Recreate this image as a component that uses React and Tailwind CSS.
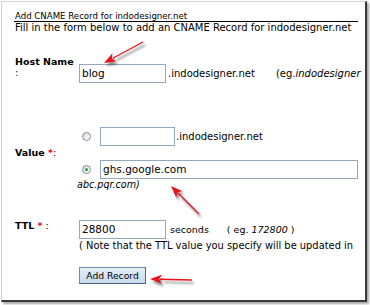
import React from "react";

function Arrow({ x1, y1, x2, y2, id }) {
  const dx = x2 - x1;
  const dy = y2 - y1;
  const len = Math.sqrt(dx * dx + dy * dy);
  const ux = dx / len;
  const uy = dy / len;
  const hl = 12;
  const hw = 4.5;
  const bx = x2 - ux * hl;
  const by = y2 - uy * hl;
  const px = -uy;
  const py = ux;
  const head = `${x2},${y2} ${bx + px * hw},${by + py * hw} ${bx + ux * 3},${by + uy * 3} ${bx - px * hw},${by - py * hw}`;
  return (
    <g>
      <g transform="translate(2,3)" filter={`url(#${id})`} opacity="0.55">
        <line x1={x1} y1={y1} x2={bx} y2={by} stroke="#333" strokeWidth="1.6" />
        <polygon points={head} fill="#333" />
      </g>
      <line x1={x1} y1={y1} x2={bx + ux * 2} y2={by + uy * 2} stroke="#e8141c" strokeWidth="1.3" />
      <polygon points={head} fill="#e8141c" />
    </g>
  );
}

function Radio({ checked }) {
  return (
    <span className="relative inline-flex h-[9px] w-[9px] shrink-0 items-center justify-center rounded-full border border-[#7d8fa3] bg-gradient-to-br from-[#d8d8d8] to-[#ffffff]">
      {checked && <span className="h-[3px] w-[3px] rounded-full bg-[#1fa52a]" />}
    </span>
  );
}

function Box({ w, children }) {
  return (
    <div
      className={`${w} flex h-[19px] shrink-0 items-center border border-[#93a9bd] bg-white pl-[2px] text-[10.5px] leading-none text-black`}
    >
      {children}
    </div>
  );
}

export default function App() {
  return (
    <div
      className="relative h-[305px] w-[370px] overflow-hidden bg-white pl-px pt-px text-black"
      style={{ fontFamily: '"DejaVu Sans", Verdana, sans-serif' }}
    >
      <div className="h-[301px] w-[366px] overflow-hidden border-l border-t border-[#d2d2d2] border-b-2 border-r-2 border-b-[#3a3a3a] border-r-[#3a3a3a] shadow-[2px_2px_2px_rgba(0,0,0,0.35)] bg-white">
        {/* header */}
        <div className="ml-[12px] mt-[9px] w-[344px] border-b border-black pl-[1px] text-[8.6px] leading-[10px] whitespace-nowrap">
          Add CNAME Record for indodesigner.net
        </div>
        <div className="pl-[13px] text-[10px] leading-[11px] whitespace-nowrap">
          Fill in the form below to add an CNAME Record for indodesigner.net
        </div>

        <div className="pl-[13px] text-[9.5px] leading-[11px]">
          {/* Host name */}
          <div className="mt-[23px] flex">
            <div className="w-[64px] shrink-0 font-bold">
              Host Name
              <div className="font-normal">:</div>
            </div>
            <div className="flex items-center whitespace-nowrap pt-[8px]">
              <Box w="w-[87px]">blog</Box>
              <span className="ml-[2px] text-[10px]">.indodesigner.net</span>
              <span className="ml-[21px] text-[10px]">
                (eg.<i>indodesigner</i>
              </span>
            </div>
          </div>

          {/* Value */}
          <div className="mt-[44px] flex">
            <div className="w-[64px] shrink-0 pt-[20px] font-bold">
              Value <span className="text-[#d01010]">*</span>
              <span className="font-normal">:</span>
            </div>
            <div className="flex flex-col">
              <div className="flex items-center whitespace-nowrap">
                <span className="ml-[3px] mr-[9px] flex">
                  <Radio />
                </span>
                <Box w="w-[75px]"></Box>
                <span className="ml-[1px] text-[10px]">.indodesigner.net</span>
              </div>
              <div className="mt-[14px] flex items-center">
                <span className="ml-[3px] mr-[9px] flex">
                  <Radio checked />
                </span>
                <Box w="w-[258px]">ghs.google.com</Box>
              </div>
              <div className="-ml-[2px] text-[9.6px] italic leading-[11px]">abc.pqr.com)</div>
            </div>
          </div>

          {/* TTL */}
          <div className="mt-[29px] flex">
            <div className="w-[64px] shrink-0 pt-[1px] font-bold">
              TTL <span className="text-[#d01010]">*</span>
              <span className="font-normal"> :</span>
            </div>
            <div className="flex flex-col whitespace-nowrap">
              <div className="mt-[1px] flex items-center">
                <Box w="w-[87px]">28800</Box>
                <span className="ml-[4px]">seconds</span>
                <span className="ml-[18px]">
                  ( eg. <i>172800</i> )
                </span>
              </div>
              <div className="mt-[1px] text-[9.9px]">( Note that the TTL value you specify will be updated in</div>
            </div>
          </div>

          {/* Button */}
          <div className="mt-[16px] flex">
            <div className="w-[64px] shrink-0" />
            <div className="flex h-[17px] w-[67px] items-center justify-center border border-[#6f8cae] border-b-[#4a6688] border-r-[#4a6688] bg-gradient-to-b from-[#e4eef8] to-[#c8daee] text-[9.2px] leading-none">
              Add Record
            </div>
          </div>
        </div>
      </div>

      <svg className="pointer-events-none absolute left-0 top-0" width="370" height="305">
        <defs>
          <filter id="sh" x="-50%" y="-50%" width="200%" height="200%">
            <feGaussianBlur stdDeviation="1.2" />
          </filter>
        </defs>
        <Arrow id="sh" x1={143} y1={42} x2={104} y2={63} />
        <Arrow id="sh" x1={199} y1={214} x2={171} y2={186} />
        <Arrow id="sh" x1={192} y1={280} x2={150} y2={279} />
      </svg>
    </div>
  );
}
